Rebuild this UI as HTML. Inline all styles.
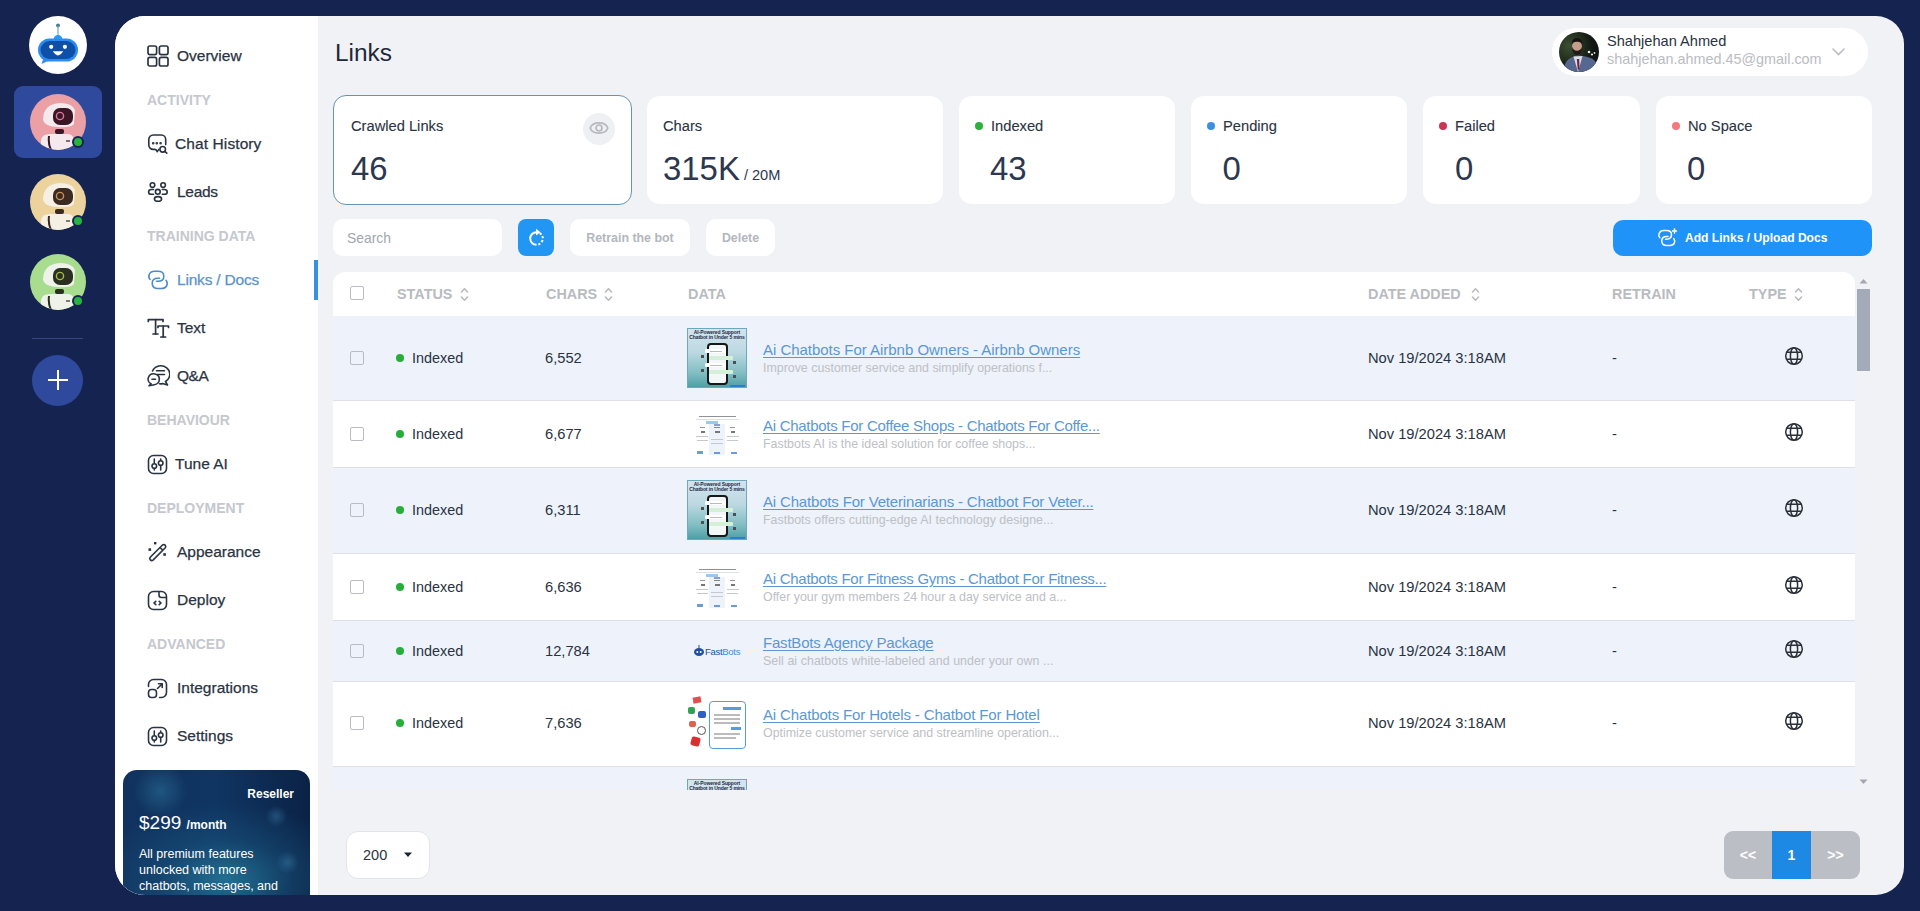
<!DOCTYPE html>
<html><head><meta charset="utf-8">
<style>
*{box-sizing:border-box;margin:0;padding:0}
html,body{width:1920px;height:911px;overflow:hidden;background:#14234f;font-family:"Liberation Sans",sans-serif;color:#1f2937}
.a{position:absolute;white-space:nowrap}
#panel{position:absolute;left:115px;top:16px;width:1789px;height:879px;border-radius:30px 28px 28px 30px;background:#f0f2f6;overflow:hidden}
#pin{position:absolute;left:-115px;top:-16px;width:1920px;height:911px}
#side{position:absolute;left:115px;top:0;width:203px;height:911px;background:#fff}
.nav{position:absolute;left:177px;font-size:15.5px;line-height:20px;height:20px;color:#2a3342;white-space:nowrap;-webkit-text-stroke:0.25px currentColor}
.ic{position:absolute;left:147px}
.sec{position:absolute;left:147px;font-size:14px;line-height:20px;height:20px;color:#c5c8ce;font-weight:bold;white-space:nowrap}
.card{top:96px;height:108px;border-radius:13px;background:#fff}
.clab{top:116px;font-size:14.7px;line-height:20px;color:#2a3342;-webkit-text-stroke:0.1px currentColor}
.cnum{top:149px;font-size:32.9px;line-height:40px;color:#2c3750}
.sdot{top:122px;width:8px;height:8px;border-radius:50%}
.btnw{top:219px;height:37px;border-radius:10px;background:#fff;font-size:12.4px;line-height:39px;font-weight:bold;color:#b3b7bd;text-align:center}
.th{top:284px;font-size:14.4px;line-height:20px;font-weight:bold;color:#b8bbc0}
.chk{left:350px;width:14px;height:14px;border:1.5px solid #b9bcc1;border-radius:2px;background:transparent}
.td{font-size:14.7px;line-height:20px;color:#2a3342}
.ttl{left:763px;font-size:15px;line-height:18px;color:#5b98d3;text-decoration:underline;text-underline-offset:2px}
.dsc{left:763px;font-size:12.4px;line-height:16px;color:#bdc0c5}
.pg{top:831px;height:48px;line-height:48px;text-align:center;color:#fff;font-weight:bold;font-size:14px}
</style></head>
<body>
<!-- left rail -->
<svg class="a" style="left:29px;top:16px" width="58" height="58" viewBox="0 0 58 58">
  <circle cx="29" cy="29" r="29" fill="#fff"/>
  <circle cx="29" cy="9.5" r="2" fill="#4f7b99"/>
  <rect x="28.4" y="10" width="1.2" height="10" fill="#7fa6c0"/>
  <path d="M24.5 23.5 Q25 19 29 19 Q33 19 33.5 23.5 Z" fill="#2a9cf0"/>
  <path d="M15 41 L12.5 48 L21 44 Z" fill="#2e8cf0"/>
  <rect x="9" y="22.5" width="40" height="23" rx="11.5" fill="#2e8cf0"/>
  <rect x="11.5" y="25" width="35" height="18" rx="9" fill="#0e50a8"/>
  <circle cx="22.2" cy="30.8" r="2.1" fill="#fff"/>
  <circle cx="35.9" cy="30.8" r="2.1" fill="#fff"/>
  <path d="M23.8 35.3 Q29 43.5 34.2 35.3 Z" fill="#fff"/>
</svg>
<div class="a" style="left:14px;top:86px;width:88px;height:72px;border-radius:9px;background:#2f4a9c"></div>

<svg class="a" style="left:30px;top:94px" width="56" height="56" viewBox="0 0 56 56"><defs><clipPath id="c1"><circle cx="28" cy="28" r="28"/></clipPath></defs>
 <g clip-path="url(#c1)"><rect width="56" height="56" fill="#eba0a6"/>
 <path d="M10 60 L11 46 Q12 40 20 40 L38 40 Q44 40 44 48 L44 60 Z" fill="#f4e9ec"/>
 <path d="M19 42 Q18 50 21 56" stroke="#3a1626" stroke-width="2" fill="none"/>
 <rect x="25" y="35" width="9" height="5" rx="2" fill="#3a1626"/>
 <path d="M13 26 Q13 10 30 9 Q42 9 45 16 L44 30 Q40 34 28 33 Q15 33 13 26 Z" fill="#f4e9ec"/>
 <rect x="23" y="14" width="20" height="17" rx="7" fill="#3a1626"/>
 <circle cx="30" cy="22" r="3.6" fill="none" stroke="#d87a9a" stroke-width="1.4"/>
 <rect x="36" y="46" width="4" height="2" fill="#3a1626" opacity=".6"/></g></svg>
<div class="a" style="left:71.5px;top:136px;width:12px;height:12px;border-radius:50%;background:#27b33f;border:2px solid #14234f"></div>

<svg class="a" style="left:30px;top:174px" width="56" height="56" viewBox="0 0 56 56"><defs><clipPath id="c2"><circle cx="28" cy="28" r="28"/></clipPath></defs>
 <g clip-path="url(#c2)"><rect width="56" height="56" fill="#ecd39d"/>
 <path d="M10 60 L11 46 Q12 40 20 40 L38 40 Q44 40 44 48 L44 60 Z" fill="#f5efe4"/>
 <path d="M19 42 Q18 50 21 56" stroke="#3a2a20" stroke-width="2" fill="none"/>
 <rect x="25" y="35" width="9" height="5" rx="2" fill="#3a2a20"/>
 <path d="M13 26 Q13 10 30 9 Q42 9 45 16 L44 30 Q40 34 28 33 Q15 33 13 26 Z" fill="#f5efe4"/>
 <rect x="23" y="14" width="20" height="17" rx="7" fill="#3a2a20"/>
 <circle cx="30" cy="22" r="3.6" fill="none" stroke="#c9905a" stroke-width="1.4"/>
 <rect x="36" y="46" width="4" height="2" fill="#3a2a20" opacity=".6"/></g></svg>
<div class="a" style="left:71.5px;top:215px;width:12px;height:12px;border-radius:50%;background:#27b33f;border:2px solid #14234f"></div>

<svg class="a" style="left:30px;top:254px" width="56" height="56" viewBox="0 0 56 56"><defs><clipPath id="c3"><circle cx="28" cy="28" r="28"/></clipPath></defs>
 <g clip-path="url(#c3)"><rect width="56" height="56" fill="#a8dc8e"/>
 <path d="M10 60 L11 46 Q12 40 20 40 L38 40 Q44 40 44 48 L44 60 Z" fill="#eef2e8"/>
 <path d="M19 42 Q18 50 21 56" stroke="#2a3020" stroke-width="2" fill="none"/>
 <rect x="25" y="35" width="9" height="5" rx="2" fill="#2a3020"/>
 <path d="M13 26 Q13 10 30 9 Q42 9 45 16 L44 30 Q40 34 28 33 Q15 33 13 26 Z" fill="#eef2e8"/>
 <rect x="23" y="14" width="20" height="17" rx="7" fill="#2a3020"/>
 <circle cx="30" cy="22" r="3.6" fill="none" stroke="#a8b84a" stroke-width="1.4"/>
 <rect x="36" y="46" width="4" height="2" fill="#2a3020" opacity=".6"/></g></svg>
<div class="a" style="left:71.5px;top:295px;width:12px;height:12px;border-radius:50%;background:#27b33f;border:2px solid #14234f"></div>

<div class="a" style="left:32px;top:338px;width:51px;height:1px;background:#34467e"></div>
<div class="a" style="left:32px;top:355px;width:51px;height:51px;border-radius:50%;background:#2f4a9c"></div>
<div class="a" style="left:48px;top:379px;width:20px;height:2.4px;background:#fff"></div>
<div class="a" style="left:56.8px;top:370px;width:2.4px;height:20px;background:#fff"></div>

<div id="panel"><div id="pin">
  <div id="side"></div>
  <div class="a" style="left:314px;top:260px;width:4px;height:40px;background:#3b8fe0"></div>

  <!-- nav -->
  <svg class="ic" style="top:45px" width="22" height="22" viewBox="0 0 22 22" fill="none" stroke="#2a3342" stroke-width="1.7"><rect x="1" y="1" width="8.6" height="8.6" rx="1.8"/><rect x="12.4" y="1" width="8.6" height="8.6" rx="1.8"/><rect x="1" y="12.4" width="8.6" height="8.6" rx="1.8"/><rect x="12.4" y="12.4" width="8.6" height="8.6" rx="1.8"/></svg>
  <div class="nav" style="top:46px">Overview</div>
  <div class="sec" style="top:90px">ACTIVITY</div>

  <svg class="ic" style="top:134px" width="22" height="22" viewBox="0 0 22 22" fill="none" stroke="#2a3342" stroke-width="1.6" stroke-linecap="round" stroke-linejoin="round"><path d="M11.8 15.4 Q10.6 17.2 10.2 17.6 Q9.4 15.4 7.8 15.4 H6.2 A4.4 4.4 0 0 1 1.8 11 V5.4 A4.4 4.4 0 0 1 6.2 1 H14.3 A4.4 4.4 0 0 1 18.7 5.4 V10.6"/><circle cx="6.2" cy="9.2" r=".5" fill="#2a3342"/><circle cx="9.8" cy="9.2" r=".5" fill="#2a3342"/><circle cx="13.6" cy="9.2" r=".5" fill="#2a3342"/><circle cx="15.7" cy="15.3" r="2.8"/><path d="M17.8 17.4 L19.8 19.2"/></svg>
  <div class="nav" style="top:134px;left:175px;letter-spacing:0.1px">Chat History</div>

  <svg class="ic" style="top:182px" width="22" height="21" viewBox="0 0 22 21" fill="none" stroke="#2a3342" stroke-width="1.6" stroke-linecap="round"><circle cx="5.5" cy="3.1" r="2.3"/><circle cx="16.1" cy="3.1" r="2.3"/><circle cx="10.8" cy="9.8" r="2.4"/><path d="M6.5 7.5 H4.5 A2.9 2.4 0 0 0 4.5 12.3 H6.5"/><path d="M15.3 7.5 H17.3 A2.9 2.4 0 0 1 17.3 12.3 H15.3"/><ellipse cx="11" cy="16.9" rx="3.6" ry="2.3"/></svg>
  <div class="nav" style="top:182px;letter-spacing:-0.3px">Leads</div>
  <div class="sec" style="top:226px">TRAINING DATA</div>

  <svg class="ic" style="top:270px" width="22" height="20" viewBox="0 0 22 20" fill="none" stroke="#4f8bc4" stroke-width="1.6" stroke-linecap="round"><path d="M3 9.5 C1 7.5 1.5 1.2 7.5 1.2 H11 C14.8 1.2 16.8 3.5 16.8 6.2 C16.8 9 14.8 11.3 11 11.3 H9.5"/><path d="M12.5 8.3 H11 C7.2 8.3 5.2 10.5 5.2 13.3 C5.2 16.2 7.2 18.5 11 18.5 H14.5 C20 18.5 21.5 13.5 19 10.3"/></svg>
  <div class="nav" style="top:270px;color:#5b93c9;letter-spacing:-0.2px">Links / Docs</div>

  <svg class="ic" style="top:318px" width="23" height="21" viewBox="0 0 23 21" fill="none" stroke="#2a3342" stroke-width="1.7" stroke-linecap="round" stroke-linejoin="round"><path d="M1.3 3.5 V1.6 H16 V3.5"/><path d="M8.6 1.6 V16"/><path d="M6 16 H11"/><path d="M11 9.5 V8 H21.5 V9.5"/><path d="M16.2 8 V19"/><path d="M13.8 19 H18.6"/></svg>
  <div class="nav" style="top:318px;letter-spacing:0px">Text</div>

  <svg class="ic" style="top:364px" width="23" height="23" viewBox="0 0 23 23" fill="none" stroke="#2a3342" stroke-width="1.6" stroke-linecap="round" stroke-linejoin="round"><path d="M5.5 7 A9 8.5 0 1 1 18.5 17.5 L20.5 21 L15.5 19.6 A9 8.5 0 0 1 12.5 19.8"/><path d="M9.5 6.8 H17.5 M10.5 10.5 H17.5"/><path d="M12.3 15.5 A5.6 5.3 0 1 0 4 19.8 L2 21.8 L7.3 20.8 A5.6 5.3 0 0 0 12.3 15.5 Z" fill="#fff"/><path d="M5 15.3 H8.5"/></svg>
  <div class="nav" style="top:366px;letter-spacing:-0.5px">Q&amp;A</div>
  <div class="sec" style="top:410px">BEHAVIOUR</div>

  <svg class="ic" style="top:454px;left:147px" width="21" height="21" viewBox="0 0 21 21" fill="none" stroke="#2a3342" stroke-width="1.6" stroke-linecap="round"><rect x="1.5" y="1.5" width="18" height="18" rx="5"/><path d="M7.3 5 V9"/><circle cx="7.3" cy="12" r="2.3"/><path d="M7.3 14.5 V16"/><path d="M13.7 5 V6.3"/><circle cx="13.7" cy="9" r="2.3"/><path d="M13.7 11.5 V16"/></svg>
  <div class="nav" style="top:454px;left:175px">Tune AI</div>
  <div class="sec" style="top:498px">DEPLOYMENT</div>

  <svg class="ic" style="top:541px" width="22" height="22" viewBox="0 0 22 22" fill="none" stroke="#2a3342" stroke-width="1.6" stroke-linejoin="round"><path d="M3.2 16.3 L15.5 4 A2 2 0 0 1 18.3 6.8 L6 19.1 A2 2 0 0 1 3.2 16.3 Z"/><path d="M13 6.5 L15.8 9.3"/><rect x="1.5" y="7.3" width="2.6" height="2.6" fill="#2a3342" stroke="none"/><rect x="7" y="1" width="2.4" height="2.4" fill="#2a3342" stroke="none"/><rect x="16.3" y="12.2" width="2.6" height="2.6" fill="#2a3342" stroke="none"/></svg>
  <div class="nav" style="top:542px">Appearance</div>

  <svg class="ic" style="top:590px" width="21" height="21" viewBox="0 0 21 21" fill="none" stroke="#2a3342" stroke-width="1.6" stroke-linecap="round" stroke-linejoin="round"><rect x="1.5" y="1.5" width="18" height="18" rx="5"/><path d="M12 1.8 V5 A2.5 2.5 0 0 0 14.5 7.5 H19"/><path d="M8.8 11.3 L7 13 L8.8 14.7"/><path d="M12.2 11.3 L14 13 L12.2 14.7"/></svg>
  <div class="nav" style="top:590px">Deploy</div>
  <div class="sec" style="top:634px">ADVANCED</div>

  <svg class="ic" style="top:678px" width="21" height="21" viewBox="0 0 21 21" fill="none" stroke="#2a3342" stroke-width="1.6" stroke-linecap="round" stroke-linejoin="round"><path d="M1.5 8.5 V6.5 A5 5 0 0 1 6.5 1.5 H14.5 A5 5 0 0 1 19.5 6.5 V14.5 A5 5 0 0 1 14.5 19.5 H12.5"/><rect x="1.5" y="11.5" width="8" height="8" rx="3"/><path d="M10.5 10.5 L15 6"/><path d="M11.5 5.8 H15.2 V9.5"/></svg>
  <div class="nav" style="top:678px">Integrations</div>

  <svg class="ic" style="top:726px;left:147px" width="21" height="21" viewBox="0 0 21 21" fill="none" stroke="#2a3342" stroke-width="1.6" stroke-linecap="round"><rect x="1.5" y="1.5" width="18" height="18" rx="5"/><path d="M7.3 5 V9"/><circle cx="7.3" cy="12" r="2.3"/><path d="M7.3 14.5 V16"/><path d="M13.7 5 V6.3"/><circle cx="13.7" cy="9" r="2.3"/><path d="M13.7 11.5 V16"/></svg>
  <div class="nav" style="top:726px">Settings</div>


  <!-- header -->
  <div class="a" style="left:335px;top:38px;font-size:24.4px;line-height:30px;color:#1e2838">Links</div>
  <div class="a" style="left:1552px;top:28px;width:316px;height:48px;border-radius:24px;background:#fff"></div>
  <svg class="a" style="left:1559px;top:32px" width="40" height="40" viewBox="0 0 40 40"><defs><clipPath id="ua"><circle cx="20" cy="20" r="20"/></clipPath><radialGradient id="ubg" cx="25%" cy="35%" r="60%"><stop offset="0" stop-color="#3a5030"/><stop offset="1" stop-color="#121612"/></radialGradient></defs>
   <g clip-path="url(#ua)"><rect width="40" height="40" fill="url(#ubg)"/>
   <path d="M3 40 L7 30 Q12 24 19 23.5 Q30 24 35 28 L40 34 L40 40 Z" fill="#56688f"/>
   <path d="M14.5 24.5 L23.5 24 L19 40 Z" fill="#dcdde4"/><path d="M17.8 27 L20.2 27 L20.5 37 L18.8 38 Z" fill="#6b2442"/>
   <circle cx="30" cy="20" r="1.3" fill="#e8f0e8"/><circle cx="33" cy="22.5" r="1.1" fill="#e8f0e8"/><circle cx="35.5" cy="21" r=".9" fill="#cfe0cf"/>
   <ellipse cx="18" cy="14.5" rx="5" ry="6.2" fill="#c49e8a"/>
   <path d="M12.8 13 Q12.5 6 18 6 Q23.5 6 23.3 13 Q22 9.5 18 9.8 Q14 9.5 12.8 13 Z" fill="#17120f"/>
   <path d="M13 14.5 Q13 22.5 18 23 Q23 22.5 23 14.5 Q22 18.5 18 18.8 Q14 18.5 13 14.5 Z" fill="#221a16"/></g></svg>
  <div class="a" style="left:1607px;top:32px;font-size:14.6px;line-height:18px;color:#2a3342">Shahjehan Ahmed</div>
  <div class="a" style="left:1607px;top:50px;font-size:14.4px;line-height:18px;color:#b9bcc2">shahjehan.ahmed.45@gmail.com</div>
  <svg class="a" style="left:1832px;top:48px" width="13" height="8" viewBox="0 0 13 8" fill="none" stroke="#b9bcc2" stroke-width="1.6" stroke-linecap="round"><path d="M1 1 L6.5 6.5 L12 1"/></svg>

  <!-- stat cards -->
  <div class="a card" style="left:333px;top:95px;height:110px;width:299px;border:1px solid #6593b5"></div>
  <div class="a card" style="left:647px;width:296px"></div>
  <div class="a card" style="left:959px;width:216px"></div>
  <div class="a card" style="left:1191px;width:216px"></div>
  <div class="a card" style="left:1423px;width:217px"></div>
  <div class="a card" style="left:1656px;width:216px"></div>
  <div class="a clab" style="left:351px">Crawled Links</div>
  <div class="a cnum" style="left:351px">46</div>
  <div class="a" style="left:583px;top:112.5px;width:32px;height:32px;border-radius:50%;background:#eef0f3"></div>
  <svg class="a" style="left:589px;top:120px" width="20" height="16" viewBox="0 0 20 16" fill="none" stroke="#b5b9bf" stroke-width="1.7"><path d="M1.2 8 C3.5 1.2, 16.5 1.2, 18.8 8 C16.5 14.8, 3.5 14.8, 1.2 8 Z"/><circle cx="10" cy="8" r="3"/></svg>
  <div class="a clab" style="left:663px">Chars</div>
  <div class="a cnum" style="left:663px">315K<span style="font-size:14.6px;letter-spacing:0"> / 20M</span></div>
  <div class="a sdot" style="left:975px;background:#2bb13c"></div>
  <div class="a clab" style="left:991px">Indexed</div>
  <div class="a cnum" style="left:990px">43</div>
  <div class="a sdot" style="left:1207px;background:#3b90e3"></div>
  <div class="a clab" style="left:1223px">Pending</div>
  <div class="a cnum" style="left:1222.5px">0</div>
  <div class="a sdot" style="left:1439px;background:#c93553"></div>
  <div class="a clab" style="left:1455px">Failed</div>
  <div class="a cnum" style="left:1455px">0</div>
  <div class="a sdot" style="left:1672px;background:#f07a7c"></div>
  <div class="a clab" style="left:1688px">No Space</div>
  <div class="a cnum" style="left:1687px">0</div>

  <!-- toolbar -->
  <div class="a" style="left:333px;top:219px;width:169px;height:37px;border-radius:10px;background:#fff"></div>
  <div class="a" style="left:347px;top:228px;font-size:13.9px;line-height:20px;color:#a3a7ad">Search</div>
  <div class="a" style="left:518px;top:219px;width:36px;height:37px;border-radius:8px;background:#2196f3"></div>
  <svg class="a" style="left:526px;top:228px" width="21" height="21" viewBox="0 0 21 21" fill="none" stroke="#fff" stroke-width="2"><path d="M10.5 4.2 A6.3 6.3 0 0 0 10.5 16.8"/><path d="M10 0.8 L14.5 4.2 L10 7.6 Z" fill="#fff" stroke="none"/><path d="M12.3 16.5 A6.3 6.3 0 0 0 16.7 9.5 A6.3 6.3 0 0 0 13.2 4.9" stroke-dasharray="2.2 1.8"/></svg>
  <div class="a btnw" style="left:570px;width:120px">Retrain the bot</div>
  <div class="a btnw" style="left:706px;width:69px">Delete</div>
  <div class="a" style="left:1613px;top:220px;width:259px;height:36px;border-radius:10px;background:#1f93f8"></div>
  <svg class="a" style="left:1657px;top:228px" width="21" height="20" viewBox="0 0 21 20" fill="none" stroke="#fff" stroke-width="1.5" stroke-linecap="round"><path d="M2.8 9.8 C1 8 1.5 2.5 6.8 2.5 H9.5 C12.8 2.5 14.5 4.5 14.5 6.8 C14.5 9.2 12.8 11.2 9.5 11.2 H8.5"/><path d="M11 8.6 H9.8 C6.5 8.6 4.8 10.5 4.8 12.9 C4.8 15.4 6.5 17.4 9.8 17.4 H12.8 C17.5 17.4 18.8 13.5 16.8 10.6"/><path d="M17.5 1 V5 M15.5 3 H19.5"/></svg>
  <div class="a" style="left:1685px;top:229px;font-size:12.1px;line-height:18px;font-weight:bold;color:#fff">Add Links / Upload Docs</div>

<div class="a" style="left:333px;top:272px;width:1522px;height:518px;overflow:hidden;border-radius:12px 12px 0 0">
<div class="a" style="left:0;top:0;width:1522px;height:44px;background:#fff"></div>
<div class="a" style="left:0;top:44px;width:1522px;height:84px;background:#edf2fb"></div>
<div class="a" style="left:0;top:128px;width:1522px;height:1px;background:#dde1e7"></div>
<div class="a" style="left:0;top:129px;width:1522px;height:66px;background:#fff"></div>
<div class="a" style="left:0;top:195px;width:1522px;height:1px;background:#dde1e7"></div>
<div class="a" style="left:0;top:196px;width:1522px;height:85px;background:#edf2fb"></div>
<div class="a" style="left:0;top:281px;width:1522px;height:1px;background:#dde1e7"></div>
<div class="a" style="left:0;top:282px;width:1522px;height:66px;background:#fff"></div>
<div class="a" style="left:0;top:348px;width:1522px;height:1px;background:#dde1e7"></div>
<div class="a" style="left:0;top:349px;width:1522px;height:60px;background:#edf2fb"></div>
<div class="a" style="left:0;top:409px;width:1522px;height:1px;background:#dde1e7"></div>
<div class="a" style="left:0;top:410px;width:1522px;height:84px;background:#fff"></div>
<div class="a" style="left:0;top:494px;width:1522px;height:1px;background:#dde1e7"></div>
<div class="a" style="left:0;top:495px;width:1522px;height:30px;background:#edf2fb"></div>
</div>
<div class="a chk" style="top:286px"></div>
<div class="a th" style="left:397px">STATUS</div><svg class="a" style="left:460px;top:287px" width="9" height="15" viewBox="0 0 9 15" fill="none" stroke="#b8bbc0" stroke-width="1.6" stroke-linecap="round" stroke-linejoin="round"><path d="M1.5 5 L4.5 1.8 L7.5 5"/><path d="M1.5 10 L4.5 13.2 L7.5 10"/></svg>
<div class="a th" style="left:546px">CHARS</div><svg class="a" style="left:604px;top:287px" width="9" height="15" viewBox="0 0 9 15" fill="none" stroke="#b8bbc0" stroke-width="1.6" stroke-linecap="round" stroke-linejoin="round"><path d="M1.5 5 L4.5 1.8 L7.5 5"/><path d="M1.5 10 L4.5 13.2 L7.5 10"/></svg>
<div class="a th" style="left:688px">DATA</div>
<div class="a th" style="left:1368px">DATE ADDED</div><svg class="a" style="left:1471px;top:287px" width="9" height="15" viewBox="0 0 9 15" fill="none" stroke="#b8bbc0" stroke-width="1.6" stroke-linecap="round" stroke-linejoin="round"><path d="M1.5 5 L4.5 1.8 L7.5 5"/><path d="M1.5 10 L4.5 13.2 L7.5 10"/></svg>
<div class="a th" style="left:1612px">RETRAIN</div>
<div class="a th" style="left:1749px">TYPE</div><svg class="a" style="left:1794px;top:287px" width="9" height="15" viewBox="0 0 9 15" fill="none" stroke="#b8bbc0" stroke-width="1.6" stroke-linecap="round" stroke-linejoin="round"><path d="M1.5 5 L4.5 1.8 L7.5 5"/><path d="M1.5 10 L4.5 13.2 L7.5 10"/></svg>
<div class="a chk" style="top:351px"></div>
<div class="a" style="left:396px;top:354.0px;width:8px;height:8px;border-radius:50%;background:#27ae3a"></div>
<div class="a td" style="left:412px;top:348px;font-size:14.4px">Indexed</div>
<div class="a td" style="left:545px;top:348px">6,552</div>
<div class="a" style="left:687px;top:328px;width:60px;height:60px;background:linear-gradient(180deg,#d3e4ee 0%,#bcd9e2 40%,#7dbcc0 78%,#4e9fa6 100%);border:1px solid #6fa8bd;overflow:hidden">
<div class="a" style="left:0;top:0.5px;width:58px;text-align:center;font-size:5px;line-height:5.5px;font-weight:bold;color:#1d2a44;letter-spacing:-.1px">AI-Powered Support<br>Chatbot in Under 5 mins</div>
<div class="a" style="left:19px;top:13.5px;width:21px;height:42px;border:2.3px solid #141818;border-radius:4px;background:#f4f7f7"></div>
<div class="a" style="left:17px;top:20px;width:21px;height:4px;background:#fff;border-radius:1px"></div><div class="a" style="left:22px;top:21.5px;width:12px;height:1px;background:#bbb"></div>
<div class="a" style="left:21px;top:27px;width:24px;height:4px;background:#d4f0d8;border-radius:1px"></div>
<div class="a" style="left:17px;top:34px;width:21px;height:4px;background:#fff;border-radius:1px"></div><div class="a" style="left:22px;top:35.5px;width:12px;height:1px;background:#bbb"></div>
<div class="a" style="left:21px;top:41px;width:24px;height:4px;background:#d4f0d8;border-radius:1px"></div>
<div class="a" style="left:13px;top:26px;width:3px;height:3px;background:#4a4f55"></div><div class="a" style="left:13px;top:40px;width:3px;height:3px;background:#4a4f55"></div>
<div class="a" style="left:44.5px;top:32px;width:3px;height:3px;background:#4a4f55"></div><div class="a" style="left:44.5px;top:46px;width:3px;height:3px;background:#4a4f55"></div>
<div class="a" style="left:42px;top:55.5px;width:15px;height:2px;background:#2a7fd0"></div></div>
<div class="a ttl" style="top:341px;letter-spacing:-0.03px">Ai Chatbots For Airbnb Owners - Airbnb Owners</div>
<div class="a dsc" style="top:360px">Improve customer service and simplify operations f...</div>
<div class="a td" style="left:1368px;top:348px">Nov 19/2024 3:18AM</div>
<div class="a td" style="left:1612px;top:348px">-</div>
<svg class="a" style="left:1784px;top:346px" width="20" height="20" viewBox="0 0 20 20" fill="none" stroke="#2a2f38" stroke-width="1.5"><circle cx="10" cy="10" r="8.3"/><ellipse cx="10" cy="10" rx="3.6" ry="8.3"/><path d="M2.4 6.3 H17.6 M2.4 13.2 H17.6"/></svg>
<div class="a chk" style="top:427px"></div>
<div class="a" style="left:396px;top:430.0px;width:8px;height:8px;border-radius:50%;background:#27ae3a"></div>
<div class="a td" style="left:412px;top:424px;font-size:14.4px">Indexed</div>
<div class="a td" style="left:545px;top:424px">6,677</div>
<div class="a" style="left:687px;top:399px;width:60px;height:60px;overflow:hidden">
<div class="a" style="left:12px;top:16.5px;width:37px;height:1.5px;background:#6a6e78;opacity:.75"></div>
<div class="a" style="left:9px;top:19.5px;width:43px;height:1px;background:#c8ccd4;opacity:.6"></div>
<div class="a" style="left:19px;top:22px;width:12px;height:2.5px;background:#9cc8f0"></div>
<div class="a" style="left:22px;top:24.5px;width:16px;height:31px;background:#eef2fb"></div>
<div class="a" style="left:27px;top:25px;width:6px;height:2px;background:#8aa0c8"></div>
<div class="a" style="left:13px;top:28px;width:5px;height:1.3px;background:#999"></div><div class="a" style="left:27px;top:28px;width:6px;height:1.3px;background:#888"></div><div class="a" style="left:43px;top:28px;width:5px;height:1.3px;background:#999"></div>
<div class="a" style="left:14px;top:32px;width:4px;height:1.5px;background:#777"></div><div class="a" style="left:28px;top:32px;width:5px;height:1.5px;background:#777"></div><div class="a" style="left:44px;top:32px;width:4px;height:1.5px;background:#777"></div>
<div class="a" style="left:9px;top:37px;width:12px;height:1px;background:#c5c8ce"></div><div class="a" style="left:40px;top:37px;width:12px;height:1px;background:#c5c8ce"></div>
<div class="a" style="left:10px;top:41px;width:11px;height:1px;background:#c5c8ce"></div><div class="a" style="left:40px;top:41px;width:11px;height:1px;background:#c5c8ce"></div>
<div class="a" style="left:24px;top:40px;width:12px;height:1px;background:#c5c8ce"></div><div class="a" style="left:24px;top:44px;width:12px;height:1px;background:#c5c8ce"></div>
<div class="a" style="left:10px;top:52px;width:6px;height:2.5px;background:#6f9ad8"></div><div class="a" style="left:27px;top:52.5px;width:6px;height:2.5px;background:#6f9ad8"></div><div class="a" style="left:44px;top:52.5px;width:6px;height:2.5px;background:#6f9ad8"></div></div>
<div class="a ttl" style="top:417px;letter-spacing:-0.28px">Ai Chatbots For Coffee Shops - Chatbots For Coffe...</div>
<div class="a dsc" style="top:436px">Fastbots AI is the ideal solution for coffee shops...</div>
<div class="a td" style="left:1368px;top:424px">Nov 19/2024 3:18AM</div>
<div class="a td" style="left:1612px;top:424px">-</div>
<svg class="a" style="left:1784px;top:422px" width="20" height="20" viewBox="0 0 20 20" fill="none" stroke="#2a2f38" stroke-width="1.5"><circle cx="10" cy="10" r="8.3"/><ellipse cx="10" cy="10" rx="3.6" ry="8.3"/><path d="M2.4 6.3 H17.6 M2.4 13.2 H17.6"/></svg>
<div class="a chk" style="top:503px"></div>
<div class="a" style="left:396px;top:506.0px;width:8px;height:8px;border-radius:50%;background:#27ae3a"></div>
<div class="a td" style="left:412px;top:500px;font-size:14.4px">Indexed</div>
<div class="a td" style="left:545px;top:500px">6,311</div>
<div class="a" style="left:687px;top:480px;width:60px;height:60px;background:linear-gradient(180deg,#d3e4ee 0%,#bcd9e2 40%,#7dbcc0 78%,#4e9fa6 100%);border:1px solid #6fa8bd;overflow:hidden">
<div class="a" style="left:0;top:0.5px;width:58px;text-align:center;font-size:5px;line-height:5.5px;font-weight:bold;color:#1d2a44;letter-spacing:-.1px">AI-Powered Support<br>Chatbot in Under 5 mins</div>
<div class="a" style="left:19px;top:13.5px;width:21px;height:42px;border:2.3px solid #141818;border-radius:4px;background:#f4f7f7"></div>
<div class="a" style="left:17px;top:20px;width:21px;height:4px;background:#fff;border-radius:1px"></div><div class="a" style="left:22px;top:21.5px;width:12px;height:1px;background:#bbb"></div>
<div class="a" style="left:21px;top:27px;width:24px;height:4px;background:#d4f0d8;border-radius:1px"></div>
<div class="a" style="left:17px;top:34px;width:21px;height:4px;background:#fff;border-radius:1px"></div><div class="a" style="left:22px;top:35.5px;width:12px;height:1px;background:#bbb"></div>
<div class="a" style="left:21px;top:41px;width:24px;height:4px;background:#d4f0d8;border-radius:1px"></div>
<div class="a" style="left:13px;top:26px;width:3px;height:3px;background:#4a4f55"></div><div class="a" style="left:13px;top:40px;width:3px;height:3px;background:#4a4f55"></div>
<div class="a" style="left:44.5px;top:32px;width:3px;height:3px;background:#4a4f55"></div><div class="a" style="left:44.5px;top:46px;width:3px;height:3px;background:#4a4f55"></div>
<div class="a" style="left:42px;top:55.5px;width:15px;height:2px;background:#2a7fd0"></div></div>
<div class="a ttl" style="top:493px;letter-spacing:-0.17px">Ai Chatbots For Veterinarians - Chatbot For Veter...</div>
<div class="a dsc" style="top:512px;letter-spacing:0.04px">Fastbots offers cutting-edge AI technology designe...</div>
<div class="a td" style="left:1368px;top:500px">Nov 19/2024 3:18AM</div>
<div class="a td" style="left:1612px;top:500px">-</div>
<svg class="a" style="left:1784px;top:498px" width="20" height="20" viewBox="0 0 20 20" fill="none" stroke="#2a2f38" stroke-width="1.5"><circle cx="10" cy="10" r="8.3"/><ellipse cx="10" cy="10" rx="3.6" ry="8.3"/><path d="M2.4 6.3 H17.6 M2.4 13.2 H17.6"/></svg>
<div class="a chk" style="top:580px"></div>
<div class="a" style="left:396px;top:583.0px;width:8px;height:8px;border-radius:50%;background:#27ae3a"></div>
<div class="a td" style="left:412px;top:577px;font-size:14.4px">Indexed</div>
<div class="a td" style="left:545px;top:577px">6,636</div>
<div class="a" style="left:687px;top:552px;width:60px;height:60px;overflow:hidden">
<div class="a" style="left:12px;top:16.5px;width:37px;height:1.5px;background:#6a6e78;opacity:.75"></div>
<div class="a" style="left:9px;top:19.5px;width:43px;height:1px;background:#c8ccd4;opacity:.6"></div>
<div class="a" style="left:19px;top:22px;width:12px;height:2.5px;background:#9cc8f0"></div>
<div class="a" style="left:22px;top:24.5px;width:16px;height:31px;background:#eef2fb"></div>
<div class="a" style="left:27px;top:25px;width:6px;height:2px;background:#8aa0c8"></div>
<div class="a" style="left:13px;top:28px;width:5px;height:1.3px;background:#999"></div><div class="a" style="left:27px;top:28px;width:6px;height:1.3px;background:#888"></div><div class="a" style="left:43px;top:28px;width:5px;height:1.3px;background:#999"></div>
<div class="a" style="left:14px;top:32px;width:4px;height:1.5px;background:#777"></div><div class="a" style="left:28px;top:32px;width:5px;height:1.5px;background:#777"></div><div class="a" style="left:44px;top:32px;width:4px;height:1.5px;background:#777"></div>
<div class="a" style="left:9px;top:37px;width:12px;height:1px;background:#c5c8ce"></div><div class="a" style="left:40px;top:37px;width:12px;height:1px;background:#c5c8ce"></div>
<div class="a" style="left:10px;top:41px;width:11px;height:1px;background:#c5c8ce"></div><div class="a" style="left:40px;top:41px;width:11px;height:1px;background:#c5c8ce"></div>
<div class="a" style="left:24px;top:40px;width:12px;height:1px;background:#c5c8ce"></div><div class="a" style="left:24px;top:44px;width:12px;height:1px;background:#c5c8ce"></div>
<div class="a" style="left:10px;top:52px;width:6px;height:2.5px;background:#6f9ad8"></div><div class="a" style="left:27px;top:52.5px;width:6px;height:2.5px;background:#6f9ad8"></div><div class="a" style="left:44px;top:52.5px;width:6px;height:2.5px;background:#6f9ad8"></div></div>
<div class="a ttl" style="top:570px;letter-spacing:-0.27px">Ai Chatbots For Fitness Gyms - Chatbot For Fitness...</div>
<div class="a dsc" style="top:589px">Offer your gym members 24 hour a day service and a...</div>
<div class="a td" style="left:1368px;top:577px">Nov 19/2024 3:18AM</div>
<div class="a td" style="left:1612px;top:577px">-</div>
<svg class="a" style="left:1784px;top:575px" width="20" height="20" viewBox="0 0 20 20" fill="none" stroke="#2a2f38" stroke-width="1.5"><circle cx="10" cy="10" r="8.3"/><ellipse cx="10" cy="10" rx="3.6" ry="8.3"/><path d="M2.4 6.3 H17.6 M2.4 13.2 H17.6"/></svg>
<div class="a chk" style="top:644px"></div>
<div class="a" style="left:396px;top:647.0px;width:8px;height:8px;border-radius:50%;background:#27ae3a"></div>
<div class="a td" style="left:412px;top:641px;font-size:14.4px">Indexed</div>
<div class="a td" style="left:545px;top:641px">12,784</div>
<svg class="a" style="left:692px;top:644px" width="50" height="14" viewBox="0 0 50 14"><ellipse cx="7" cy="8" rx="5" ry="4" fill="#1f4fa0"/><rect x="6.5" y="1" width="1" height="3" fill="#1f4fa0"/><circle cx="5.3" cy="8" r="1" fill="#fff"/><circle cx="8.7" cy="8" r="1" fill="#fff"/><text x="13" y="11" font-family="Liberation Sans" font-size="9.5" fill="#1f4fa0" letter-spacing="-.3">Fast<tspan fill="#3a8fe0">Bots</tspan></text></svg>
<div class="a ttl" style="top:634px;letter-spacing:-0.2px">FastBots Agency Package</div>
<div class="a dsc" style="top:653px;letter-spacing:0.06px">Sell ai chatbots white-labeled and under your own ...</div>
<div class="a td" style="left:1368px;top:641px">Nov 19/2024 3:18AM</div>
<div class="a td" style="left:1612px;top:641px">-</div>
<svg class="a" style="left:1784px;top:639px" width="20" height="20" viewBox="0 0 20 20" fill="none" stroke="#2a2f38" stroke-width="1.5"><circle cx="10" cy="10" r="8.3"/><ellipse cx="10" cy="10" rx="3.6" ry="8.3"/><path d="M2.4 6.3 H17.6 M2.4 13.2 H17.6"/></svg>
<div class="a chk" style="top:716px"></div>
<div class="a" style="left:396px;top:719.0px;width:8px;height:8px;border-radius:50%;background:#27ae3a"></div>
<div class="a td" style="left:412px;top:713px;font-size:14.4px">Indexed</div>
<div class="a td" style="left:545px;top:713px">7,636</div>
<div class="a" style="left:687px;top:693px;width:60px;height:60px;overflow:hidden">
<div class="a" style="left:22px;top:8px;width:37px;height:48px;border:1.5px solid #5a9ad8;border-radius:4px;background:#fff"></div>
<div class="a" style="left:36px;top:14px;width:18px;height:3px;background:#5a9ad8"></div>
<div class="a" style="left:27px;top:21px;width:26px;height:1.5px;background:#bbb"></div><div class="a" style="left:27px;top:25px;width:26px;height:1.5px;background:#bbb"></div><div class="a" style="left:27px;top:29px;width:26px;height:1.5px;background:#bbb"></div>
<div class="a" style="left:44px;top:34px;width:10px;height:3px;background:#5a9ad8"></div>
<div class="a" style="left:27px;top:40px;width:26px;height:1.5px;background:#bbb"></div><div class="a" style="left:27px;top:44px;width:22px;height:1.5px;background:#bbb"></div>
<div class="a" style="left:6px;top:4px;width:8px;height:6px;background:#e05050;transform:rotate(-10deg)"></div>
<div class="a" style="left:1px;top:14px;width:7px;height:7px;background:#35a050;border-radius:2px"></div>
<div class="a" style="left:11px;top:18px;width:8px;height:7px;background:#3060c0;border-radius:2px"></div>
<div class="a" style="left:2px;top:28px;width:7px;height:6px;background:#e06050;border-radius:2px"></div>
<div class="a" style="left:10px;top:33px;width:9px;height:9px;border:1.5px solid #555;border-radius:50%"></div>
<div class="a" style="left:4px;top:44px;width:9px;height:9px;background:#d83030;border-radius:2px;transform:rotate(15deg)"></div></div>
<div class="a ttl" style="top:706px;letter-spacing:-0.14px">Ai Chatbots For Hotels - Chatbot For Hotel</div>
<div class="a dsc" style="top:725px">Optimize customer service and streamline operation...</div>
<div class="a td" style="left:1368px;top:713px">Nov 19/2024 3:18AM</div>
<div class="a td" style="left:1612px;top:713px">-</div>
<svg class="a" style="left:1784px;top:711px" width="20" height="20" viewBox="0 0 20 20" fill="none" stroke="#2a2f38" stroke-width="1.5"><circle cx="10" cy="10" r="8.3"/><ellipse cx="10" cy="10" rx="3.6" ry="8.3"/><path d="M2.4 6.3 H17.6 M2.4 13.2 H17.6"/></svg>
<div class="a" style="left:687px;top:779px;width:60px;height:11px;background:#d3e4ee;border:1px solid #6fa8bd;border-bottom:none;overflow:hidden"><div class="a" style="left:0;top:0.5px;width:58px;text-align:center;font-size:5px;line-height:5.5px;font-weight:bold;color:#1d2a44;letter-spacing:-.1px">AI-Powered Support<br>Chatbot in Under 5 mins</div></div>
<svg class="a" style="left:1859px;top:278px" width="9" height="6" viewBox="0 0 9 6"><path d="M0.5 5.5 L4.5 1 L8.5 5.5 Z" fill="#a3a8b0"/></svg>
<div class="a" style="left:1857px;top:289px;width:13px;height:82px;background:#a4abb8"></div>
<svg class="a" style="left:1859px;top:779px" width="9" height="6" viewBox="0 0 9 6"><path d="M0.5 0.5 L4.5 5 L8.5 0.5 Z" fill="#a3a8b0"/></svg>
<div class="a" style="left:346px;top:831px;width:84px;height:48px;border-radius:12px;background:#fff;border:1px solid #e1e4e9"></div>
<div class="a td" style="left:363px;top:845px;font-size:14.5px">200</div>
<svg class="a" style="left:403px;top:852px" width="10" height="6" viewBox="0 0 10 6"><path d="M1 0.5 L5 5 L9 0.5 Z" fill="#1f2430"/></svg>
<div class="a" style="left:1724px;top:831px;width:136px;height:48px;border-radius:9px;background:#bcbec6;overflow:hidden"><div class="a" style="left:48px;top:0;width:39px;height:48px;background:#1e88e5"></div></div>
<div class="a pg" style="left:1724px;width:48px">&lt;&lt;</div>
<div class="a pg" style="left:1772px;width:39px">1</div>
<div class="a pg" style="left:1811px;width:49px">&gt;&gt;</div>

  <!-- reseller card -->
  <div class="a" style="left:123px;top:770px;width:187px;height:140px;border-radius:14px;overflow:hidden;background:radial-gradient(circle at 20% 15%,rgba(60,150,190,.35) 0,rgba(60,150,190,0) 14%),radial-gradient(circle at 82% 33%,rgba(80,160,210,.3) 0,rgba(80,160,210,0) 6%),radial-gradient(circle at 88% 66%,rgba(80,160,210,.3) 0,rgba(80,160,210,0) 6%),radial-gradient(ellipse 70% 55% at 55% 78%,rgba(40,130,160,.75) 0%,rgba(30,100,140,.35) 50%,rgba(20,70,120,0) 100%),linear-gradient(90deg,#11325e 0%,#0f3562 50%,#0b2246 100%)">
    <div class="a" style="right:16px;top:16px;font-size:12px;line-height:16px;font-weight:bold;color:#fff">Reseller</div>
    <div class="a" style="left:16px;top:42px;font-size:19px;line-height:22px;color:#fff">$299 <span style="font-size:12px;font-weight:bold">/month</span></div>
    <div class="a" style="left:16px;top:76px;font-size:12.5px;line-height:16px;color:#fff;white-space:normal;width:160px">All premium features unlocked with more chatbots, messages, and</div>
  </div>
</div></div>
</body></html>
